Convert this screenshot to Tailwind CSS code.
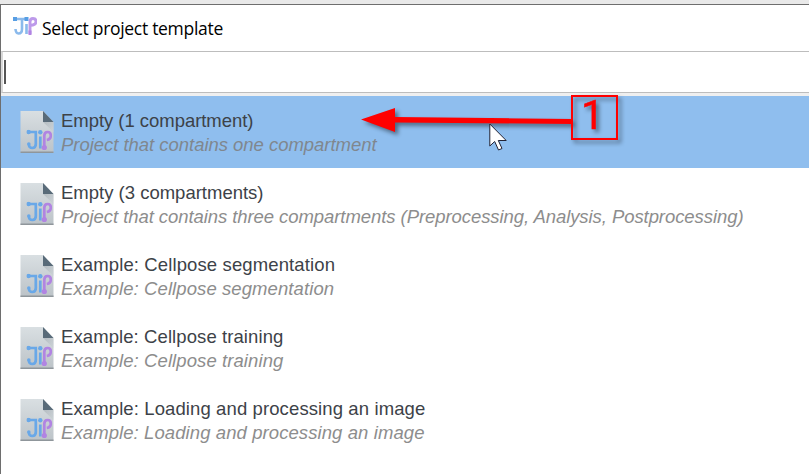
<!DOCTYPE html>
<html lang="en">
<head>
<meta charset="utf-8">
<title>Select project template</title>
<script src="https://cdn.jsdelivr.net/npm/@tailwindcss/browser@4"></script>
</head>
<body class="w-[809px] h-[474px] overflow-hidden bg-[#e9e9e9] pt-1">
<svg class="absolute w-0 h-0">
  <defs>
    <linearGradient id="paper" x1="0" y1="0" x2="0" y2="1"><stop offset="0" stop-color="#d9dfe2"/><stop offset="1" stop-color="#bcc3c8"/></linearGradient>
    <linearGradient id="fold" x1="0" y1="0" x2="1" y2="1"><stop offset="0" stop-color="#9da6ad"/><stop offset="1" stop-color="#ced4d8"/></linearGradient>
    <symbol id="jip" viewBox="0 0 26 21">
      <g fill="none" stroke-width="2.700" stroke="#69a8e8">
        <path d="M2 2.500H9.500V14.500Q9.500 18.500 6 18.500Q2.800 18.500 2.500 15M14 7V19"/>
        <path stroke="#b184e2" d="M18 18V6.500Q18 2.500 21.300 2.500Q24.500 2.500 24.500 6Q24.500 9.800 20.500 10.500"/>
      </g>
      <g fill="#69a8e8"><circle cx="2.300" cy="2.500" r="2.200"/><circle cx="14" cy="2.700" r="2.200"/><circle cx="2.500" cy="14.500" r="1.800"/></g>
      <circle cx="18" cy="18" r="2.600" fill="#b184e2"/>
    </symbol>
    <symbol id="doc" viewBox="0 0 34 43">
      <path d="M.5 0H23L33.500 11V42H.5Z" fill="url(#paper)"/>
      <path d="M23 11H33.500V21Z" fill="url(#fold)" opacity=".55"/>
      <path d="M23 0L33.500 11H23Z" fill="#596b79"/>
      <path d="M.5 41.300H33.500" stroke="#8f969b" stroke-width="1.400"/>
      <use href="#jip" x="6.300" y="18.500" width="26" height="21"/>
    </symbol>
  </defs>
</svg>
<div class="h-[470px] border-t border-l border-[#6e6e6e] bg-white flex flex-col">
  <header class="h-[46px] shrink-0 flex items-center pl-3">
    <svg class="w-[24px] h-[20px] -mt-1" viewBox="0 0 24 20">
      <g fill="none" stroke="#8bbaec" stroke-width="2.600"><path d="M2 3H13M9 3V13Q9 17.500 5.500 17.500Q2.800 17.500 2.500 13M13.500 8V18"/><path stroke="#bd9aea" stroke-width="2.900" d="M17 18V6Q17 2.500 20 2.500Q23 2.500 23 5.500Q23 9 18 9.200"/></g>
      <g fill="#579ee4"><path d="M0 1H4V5H0ZM11.500 1H15.500V5H11.500Z"/></g><path d="M15.500 14.500H18.500V19H15.500Z" fill="#b184e2"/>
    </svg>
    <h1 class="ml-[5px] font-['Open_Sans','Noto_Sans',sans-serif] text-[17.5px] tracking-[-0.3px] text-black whitespace-nowrap">Select project template</h1>
  </header>
  <div class="h-[42px] shrink-0 border border-r-0 border-[#bdbdbd] border-l-2 border-l-[#d9d9d9] bg-white pl-px flex items-center"><span class="w-[1.5px] h-6 bg-[#555]"></span></div>
  <div class="h-[3px] shrink-0 bg-[#efefef]"></div>
  <main class="relative font-['Liberation_Sans',Arial,sans-serif] text-[18.5px] leading-6 text-[#3d4248] whitespace-nowrap">
    <ul>
      <li class="h-[72px] bg-[#8fbeee] flex items-center pl-[19px]"><svg class="w-[34px] h-[43px]"><use href="#doc"/></svg><div class="ml-[7px] pt-0.5"><p class="tracking-[-0.04px]">Empty (1 compartment)</p><p class="italic text-[#80878e] tracking-[-0.03px]">Project that contains one compartment</p></div></li>
      <li class="h-[72px] flex items-center pl-[19px]"><svg class="w-[34px] h-[43px]"><use href="#doc"/></svg><div class="ml-[7px] pt-0.5"><p>Empty (3 compartments)</p><p class="italic text-[#8d8d8d] tracking-[-0.07px]">Project that contains three compartments (Preprocessing, Analysis, Postprocessing)</p></div></li>
      <li class="h-[72px] flex items-center pl-[19px]"><svg class="w-[34px] h-[43px]"><use href="#doc"/></svg><div class="ml-[7px] pt-0.5"><p class="tracking-[0.12px]">Example: Cellpose segmentation</p><p class="italic text-[#8d8d8d] tracking-[0.09px]">Example: Cellpose segmentation</p></div></li>
      <li class="h-[72px] flex items-center pl-[19px]"><svg class="w-[34px] h-[43px]"><use href="#doc"/></svg><div class="ml-[7px] pt-0.5"><p class="tracking-[0.09px]">Example: Cellpose training</p><p class="italic text-[#8d8d8d] tracking-[0.09px]">Example: Cellpose training</p></div></li>
      <li class="h-[72px] flex items-center pl-[19px]"><svg class="w-[34px] h-[43px]"><use href="#doc"/></svg><div class="ml-[7px] pt-0.5"><p class="tracking-[0.11px]">Example: Loading and processing an image</p><p class="italic text-[#8d8d8d] tracking-[0.09px]">Example: Loading and processing an image</p></div></li>
    </ul>
    <svg class="absolute left-[349px] -top-[6px] w-[290px] h-[78px] drop-shadow-[3px_3px_2px_rgba(0,0,0,0.45)]" viewBox="350 90 290 78">
      <path d="M361 119.500L395 108V117L573 119V124L395 122.500V132Z" fill="#f00"/>
      <rect x="572" y="96" width="45" height="43" fill="none" stroke="#f00" stroke-width="2"/>
      <text x="581" y="129" font-family="Roboto, Arial, sans-serif" font-size="41" fill="#f00" stroke="#f00" stroke-width=".5">1</text>
    </svg>
    <svg class="absolute left-[488px] top-[27px] w-[20px] h-[30px]" viewBox="0 0 20 30"><path d="M.8 1V23L5.700 18.500L9.500 27L13 25.500L9.300 17.500H17.200Z" fill="#fff" stroke="#223" stroke-width="1"/></svg>
  </main>
</div>
</body>
</html>
